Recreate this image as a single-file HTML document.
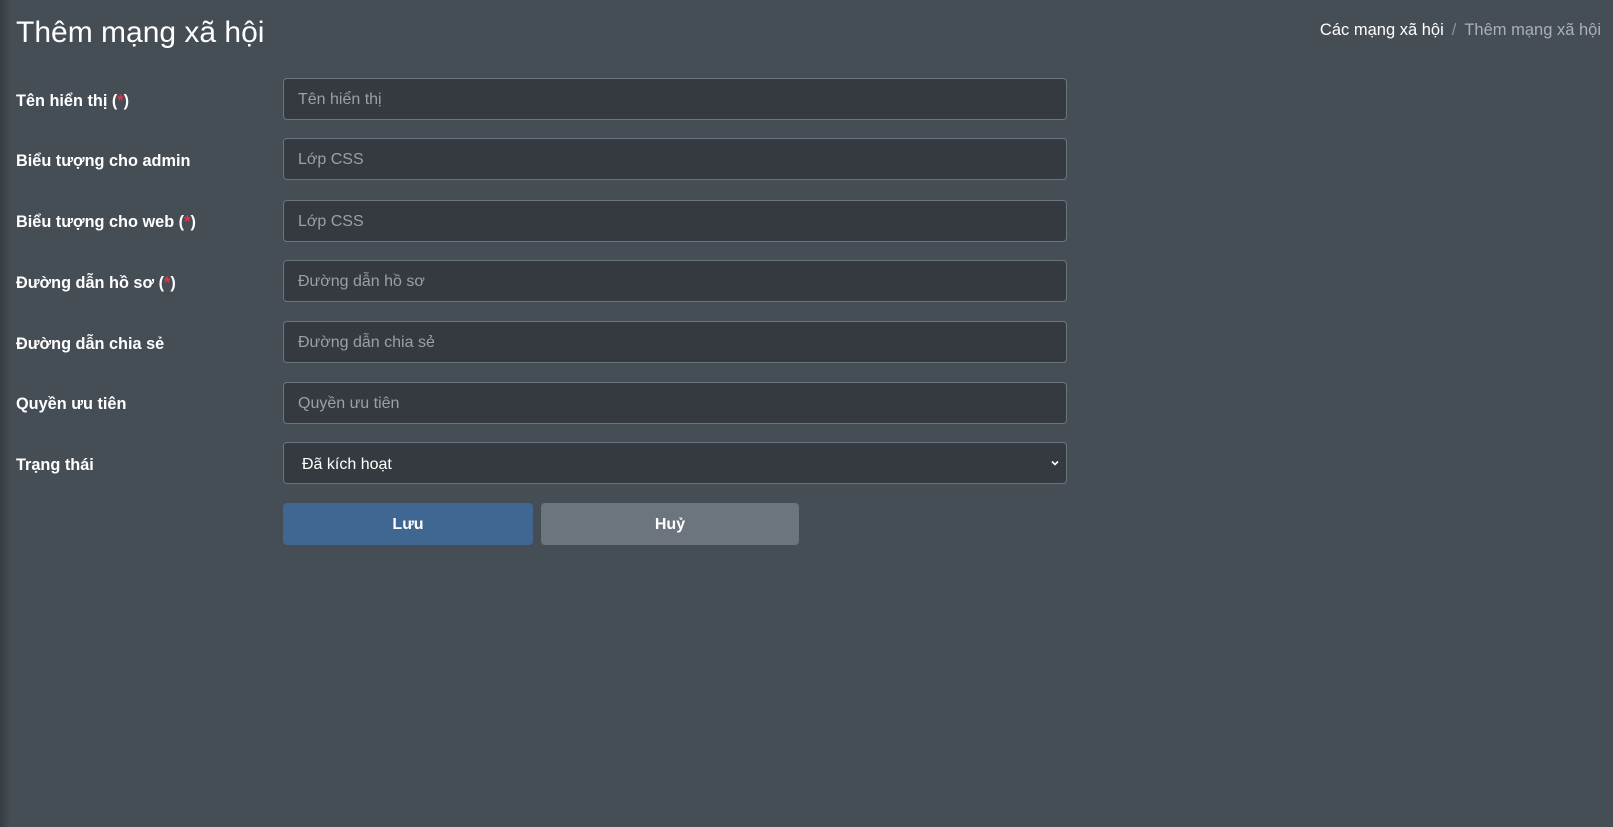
<!DOCTYPE html>
<html><head><meta charset="utf-8"><style>
html,body{margin:0;padding:0}
body{width:1613px;height:827px;background:#454d55;font-family:"Liberation Sans","DejaVu Sans",sans-serif;color:#fff;position:relative;overflow:hidden}
.shade{position:absolute;left:0;top:0;width:10px;height:827px;background:linear-gradient(to right,#353b41,#454d55)}
h1{position:absolute;left:16px;top:13px;margin:0;font-weight:normal;font-size:30px;line-height:40px}
.bc{position:absolute;right:12px;top:19px;font-size:16.5px;line-height:22px}
.bc .sep{color:#8a929a;margin:0 8px}
.bc .cur{color:#aab0b6}
.lbl{position:absolute;left:16px;font-weight:bold;font-size:16.3px;line-height:20px}
.req{color:#dc3545}
.in{position:absolute;left:283px;background:#343a40;border:1px solid #6c757d;border-radius:4px;font-size:16px;line-height:42px;color:#9aa0a6;padding-left:14px;box-sizing:border-box;width:784px;height:42px}
.sel{color:#fff;padding-left:18px}
.chev{position:absolute;right:6px;top:15px;width:10px;height:10px}
.btn{position:absolute;top:503px;height:42px;border-radius:4px;text-align:center;line-height:44px;font-size:16px;font-weight:bold}
</style></head><body>
<div class="shade"></div>
<h1>Thêm mạng xã hội</h1>
<div class="bc"><span>Các mạng xã hội</span><span class="sep">/</span><span class="cur">Thêm mạng xã hội</span></div>

<div class="lbl" style="top:91px">Tên hiển thị (<span class="req">*</span>)</div>
<div class="in" style="top:78px">Tên hiển thị</div>
<div class="lbl" style="top:151px">Biểu tượng cho admin</div>
<div class="in" style="top:138px">Lớp CSS</div>
<div class="lbl" style="top:212px">Biểu tượng cho web (<span class="req">*</span>)</div>
<div class="in" style="top:200px">Lớp CSS</div>
<div class="lbl" style="top:273px">Đường dẫn hồ sơ (<span class="req">*</span>)</div>
<div class="in" style="top:260px">Đường dẫn hồ sơ</div>
<div class="lbl" style="top:334px">Đường dẫn chia sẻ</div>
<div class="in" style="top:321px">Đường dẫn chia sẻ</div>
<div class="lbl" style="top:394px">Quyền ưu tiên</div>
<div class="in" style="top:382px">Quyền ưu tiên</div>
<div class="lbl" style="top:455px">Trạng thái</div>
<div class="in sel" style="top:442px;line-height:44px">Đã kích hoạt<svg class="chev" viewBox="0 0 10 10"><path d="M2 3.5 L5 6.5 L8 3.5" stroke="#fff" stroke-width="1.6" fill="none"/></svg></div>

<div class="btn" style="left:283px;width:250px;background:#3f6791">Lưu</div>
<div class="btn" style="left:541px;width:258px;background:#6c757d">Huỷ</div>
</body></html>
